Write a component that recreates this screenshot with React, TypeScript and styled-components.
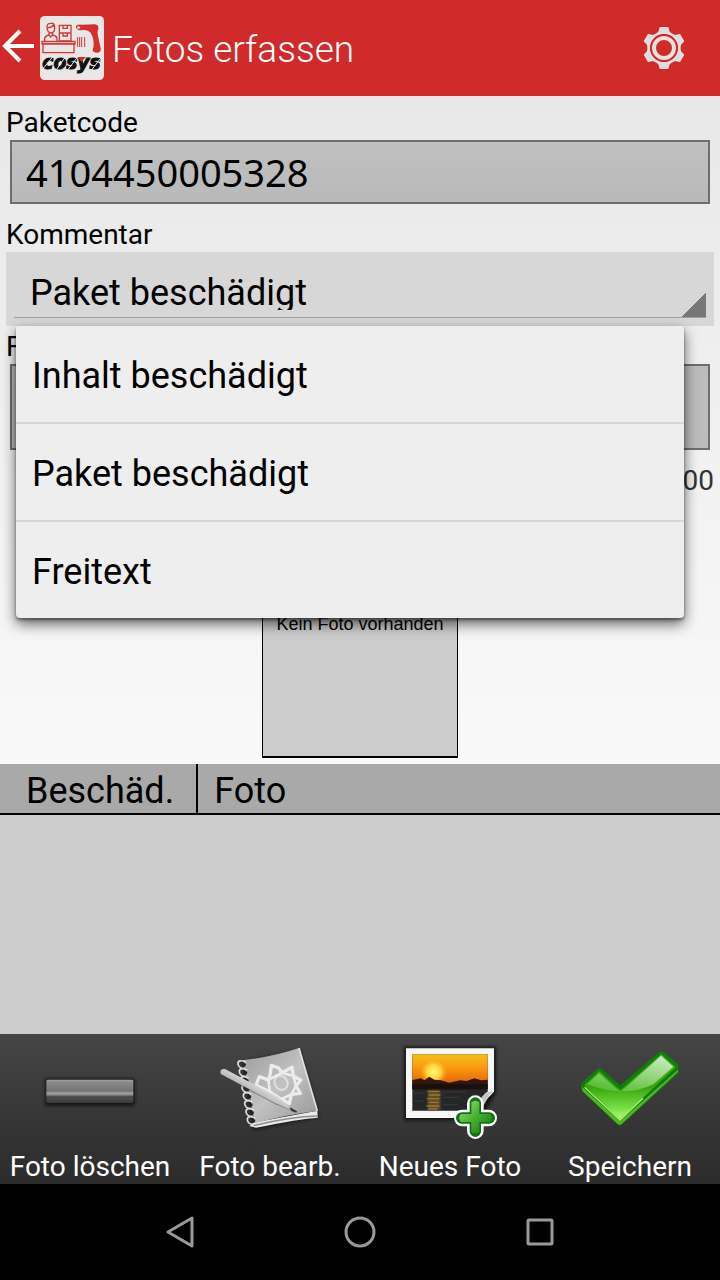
import React, { useState } from "react";
import styled, { createGlobalStyle } from "styled-components";

const GlobalStyle = createGlobalStyle`
  *, *::before, *::after { box-sizing: border-box; }
  body {
    margin: 0;
    background: #000;
    color: #000;
    font-family: Roboto, "Noto Sans", sans-serif;
  }
  button, input, textarea, select { font: inherit; color: inherit; margin: 0; }
`;

const Screen = styled.div`
  display: flex;
  flex-direction: column;
  min-height: 100vh;
`;

const Header = styled.header`
  display: flex;
  align-items: center;
  height: 96px;
  padding-right: 34px;
  background: #d02a2a;
  color: #fff;
`;

const IconButton = styled.button`
  display: flex;
  padding: 0;
  border: 0;
  background: none;
  cursor: pointer;
`;

const Title = styled.h1`
  flex: 1;
  margin: 0;
  padding: 4px 0 0 8px;
  font-size: 37px;
  line-height: 44px;
  font-weight: 300;
`;

const Form = styled.form`
  display: flex;
  flex-direction: column;
  padding: 10px 6px 6px;
  background: linear-gradient(#e8e8e8, #f9f9f9);
`;

const Label = styled.label`
  font-size: 28px;
  line-height: 34px;
`;

const CodeInput = styled.input`
  height: 64px;
  min-width: 0;
  margin: 0 4px 14px;
  padding: 0 14px;
  border: 2px solid #6e6e6e;
  border-radius: 0;
  background: linear-gradient(#c0c0c0, #b9b9b9);
  && {
    font-family: "Noto Sans", sans-serif;
    font-size: 38px;
  }
`;

const Note = styled.textarea`
  height: 86px;
  min-width: 0;
  margin: 0 4px 14px;
  padding: 12px 14px;
  border: 2px solid #6e6e6e;
  border-radius: 0;
  background: #bcbcbc;
  resize: none;
`;

const Spinner = styled.div`
  position: relative;
  height: 74px;
  margin-bottom: 4px;
  padding: 0 8px 8px;
  background: #d7d7d7;
`;

const Select = styled.select`
  display: block;
  appearance: none;
  width: 100%;
  height: 66px;
  padding: 20px 16px 7px;
  border: 0;
  border-bottom: 1px solid #a0a0a0;
  border-radius: 0;
  background: linear-gradient(135deg, transparent 50%, #777 50%) right bottom / 24px 24px no-repeat;
  outline: 0;
  && {
    font-size: 36px;
    line-height: 42px;
  }
`;

const Popup = styled.ul`
  position: absolute;
  z-index: 1;
  top: 100%;
  left: 10px;
  right: 30px;
  margin: 0;
  padding: 0;
  list-style: none;
  border-radius: 2px 2px 4px 4px;
  background: #eee;
  box-shadow: 0 6px 14px rgba(0, 0, 0, 0.6), 0 2px 3px rgba(0, 0, 0, 0.4);
`;

const Option = styled.li`
  & + & { border-top: 2px solid #d6d6d6; }
`;

const OptionButton = styled.button`
  display: block;
  width: 100%;
  height: 96px;
  padding: 4px 16px 0;
  border: 0;
  background: none;
  text-align: left;
  cursor: pointer;
  && { font-size: 36px; }
`;

const Counter = styled.output`
  align-self: flex-end;
  font-size: 28px;
  line-height: 34px;
  color: #333;
`;

const Photo = styled.div`
  align-self: center;
  display: flex;
  flex-direction: column;
  justify-content: center;
  width: 196px;
  height: 256px;
  margin-top: 4px;
  padding-bottom: 12px;
  border: 1px solid #000;
  border-bottom-width: 2px;
  background: #ccc;
  text-align: center;
  white-space: nowrap;
  font-family: "Liberation Sans", sans-serif;
  font-size: 18px;
  line-height: 28px;
`;

const TableArea = styled.div`
  flex: 1;
  background: #ccc;
`;

const Table = styled.table`
  width: 100%;
  border-collapse: separate;
  border-spacing: 0;
  background: #a9a9a9;
`;

const HeadCell = styled.th<{ $first?: boolean }>`
  height: 51px;
  padding: ${(p) => (p.$first ? "4px 22px 0 26px" : "4px 16px 0")};
  width: ${(p) => (p.$first ? "198px" : "auto")};
  border-bottom: 2px solid #000;
  border-right: ${(p) => (p.$first ? "2px solid #000" : "0")};
  text-align: left;
  font-size: 36px;
  line-height: 42px;
  font-weight: 400;
`;

const Toolbar = styled.div`
  display: grid;
  grid-template-columns: repeat(4, 1fr);
  background: linear-gradient(#454545, #2b2b2b);
`;

const Tool = styled.button`
  display: flex;
  flex-direction: column;
  align-items: center;
  gap: 10px;
  padding: 6px 0 0;
  border: 0;
  background: none;
  white-space: nowrap;
  cursor: pointer;
  && {
    color: #fff;
    font-size: 28px;
    line-height: 34px;
  }
`;

const NavBar = styled.nav`
  display: grid;
  grid-template-columns: repeat(3, 1fr);
  height: 96px;
  padding: 0 12.5%;
  background: #000;
`;

const NavButton = styled(IconButton)`
  align-items: center;
  justify-content: center;
`;

const BackArrow = () => (
  <svg width="40" height="40" viewBox="0 0 40 40" fill="none" stroke="#fff" strokeWidth="4" aria-hidden="true">
    <path d="M34 18H5M20 3L5 18L20 33" />
  </svg>
);

const Logo = () => (
  <svg width="64" height="64" viewBox="0 0 192 192" role="img" aria-label="Cosys">
    <rect width="192" height="192" rx="14" fill="#e9e7e5" />
    <g fill="none" stroke="#cf3a36" strokeWidth="4">
      <path d="M9 82H102V110H9ZM6 76H105V84H6Z" />
      <path d="M14 75V67Q15 60 27 57L32 63L38 57Q50 60 51 67V75" />
      <path d="M21 34Q20 22 32 22Q45 20 44 36Q44 50 33 51Q22 50 21 34ZM21 35Q34 36 39 28L44 34M27 50V58M38 50V58" />
      <path d="M58 28H93V75H58ZM58 51H93M69 28V37H82V28M69 51V60H82V51" />
      <path d="M113 63V93M119 63V93M125 63V93M134 63V93" strokeWidth="3" />
    </g>
    <path
      d="M108 31Q110 25 124 26L165 25Q176 26 175 38Q170 48 174 60Q177 76 182 96Q184 108 174 110Q164 112 158 105Q158 98 161 90Q162 66 152 50Q145 43 133 42L120 43Q107 41 108 31Z"
      fill="#d32f2f"
    />
    <path d="M111 32Q116 28 121 34Q119 40 113 39Z" fill="#eee" />
    <text
      x="7"
      y="158"
      fontFamily="DejaVu Sans, sans-serif"
      fontWeight="700"
      fontStyle="italic"
      fontSize="56"
      fill="#111"
      stroke="#111"
      strokeWidth="3"
    >
      cosys
    </text>
    <path d="M5 163L36 125M48 163L76 123M82 163L112 124M154 163L184 124" stroke="#e9e7e5" strokeWidth="3" />
    <path d="M112 123H138L124 137Z" fill="#d32f2f" />
  </svg>
);

const Gear = () => (
  <svg width="44" height="44" viewBox="-66 -66 132 132" aria-hidden="true">
    {[0, 60, 120, 180, 240, 300].map((angle) => (
      <path key={angle} transform={`rotate(${angle})`} d="M-13 -63H13L17 -49L25 -43V-38H-25V-43L-17 -49Z" fill="#e0dddd" />
    ))}
    <circle r="43" fill="#d02a2a" />
    <circle r="45" fill="none" stroke="#e8dfdf" strokeWidth="5" />
    <circle r="30" fill="none" stroke="#e8dfdf" strokeWidth="12" />
  </svg>
);

const RemoveIcon = () => (
  <svg width="100" height="100" viewBox="120 30 300 300" aria-hidden="true">
    <defs>
      <linearGradient id="barFace" x1="0" y1="0" x2="0" y2="1">
        <stop offset="0" stopColor="#a4a4a4" />
        <stop offset="0.1" stopColor="#8b8b8b" />
        <stop offset="0.5" stopColor="#747474" />
        <stop offset="0.56" stopColor="#a0a0a0" />
        <stop offset="0.66" stopColor="#8c8c8c" />
        <stop offset="0.7" stopColor="#505050" />
        <stop offset="1" stopColor="#3a3a3a" />
      </linearGradient>
      <filter id="barShade" x="-10%" y="-40%" width="120%" height="180%">
        <feGaussianBlur stdDeviation="4" />
      </filter>
    </defs>
    <rect x="134" y="146" width="271" height="82" rx="8" fill="#151515" filter="url(#barShade)" />
    <rect x="139" y="149" width="261" height="70" rx="5" fill="url(#barFace)" />
  </svg>
);

const NotebookIcon = () => (
  <svg width="100" height="100" viewBox="60 30 300 300" overflow="visible" aria-hidden="true">
    <defs>
      <linearGradient id="cover" x1="0" y1="0" x2="1" y2="1">
        <stop offset="0" stopColor="#9c9c9c" />
        <stop offset="0.5" stopColor="#c2c2c2" />
        <stop offset="1" stopColor="#969696" />
      </linearGradient>
      <linearGradient id="pen" x1="0" y1="1" x2="1" y2="0">
        <stop offset="0.3" stopColor="#8a8a8a" />
        <stop offset="0.6" stopColor="#e6e6e6" />
      </linearGradient>
      <filter id="bookShade" x="-10%" y="-10%" width="120%" height="120%">
        <feGaussianBlur stdDeviation="5" />
      </filter>
    </defs>
    <path d="M125 95L300 60L358 262L160 302Z" fill="#1c1c1c" filter="url(#bookShade)" />
    <path d="M160 278L352 242L353 263Q300 266 168 293L148 288Z" fill="#e9e9e9" />
    <path d="M160 287Q270 260 352 258" stroke="#8d8d8d" strokeWidth="4" fill="none" />
    <path d="M130 90Q220 80 297 54L352 243Q260 254 164 280Z" fill="url(#cover)" />
    <path d="M297 54L352 243" stroke="#e2e2e2" strokeWidth="5" />
    {[0, 1, 2, 3, 4, 5, 6, 7].map((i) => (
      <g key={i}>
        <circle cx={133 + i * 4} cy={104 + i * 24} r="5" fill="#242424" />
        <path
          d={`M${138 + i * 4} ${96 + i * 24}q-25 -10 -24 6q2 14 21 13`}
          fill="none"
          stroke="#dedede"
          strokeWidth="5"
        />
      </g>
    ))}
    <g fill="none" stroke="#ececec" strokeWidth="10" strokeLinejoin="round">
      <path d="M211 132L214 106L236 114L246 128L276 112L280 138L302 150L288 168L301 190L274 193L268 221L244 207L218 208L210 186L168 166L178 140L205 150Z" />
      <path d="M205 150L246 128L280 138L288 168L274 193L244 207L210 186Z" strokeWidth="8" />
      <path d="M230 140Q256 132 263 158Q262 185 236 178Q214 160 230 140Z" strokeWidth="6" opacity="0.7" />
    </g>
    <path d="M72 117L237 206L287 246L225 223L62 136Q55 117 72 117Z" fill="#3d3d3d" opacity="0.4" />
    <path d="M75 117L235 202L287 245L224 218L62 132Q58 115 75 117Z" fill="url(#pen)" />
    <path d="M274 237L290 246L276 241Z" stroke="#333" strokeWidth="5" />
  </svg>
);

const NewPhotoIcon = () => (
  <svg width="100" height="100" viewBox="90 30 300 300" aria-hidden="true">
    <defs>
      <linearGradient id="sky" x1="0" y1="0" x2="0" y2="1">
        <stop offset="0" stopColor="#f2c01c" />
        <stop offset="0.45" stopColor="#fb9a10" />
        <stop offset="1" stopColor="#e2660a" />
      </linearGradient>
      <radialGradient id="sun">
        <stop offset="0" stopColor="#fff27a" />
        <stop offset="0.5" stopColor="#ffd83c" />
        <stop offset="1" stopColor="#fca013" stopOpacity="0" />
      </radialGradient>
      <linearGradient id="plusFace" x1="0" y1="0" x2="1" y2="1">
        <stop offset="0" stopColor="#9be07c" />
        <stop offset="0.5" stopColor="#46b032" />
        <stop offset="1" stopColor="#16750e" />
      </linearGradient>
      <filter id="photoShade" x="-10%" y="-10%" width="120%" height="120%">
        <feGaussianBlur stdDeviation="5" />
      </filter>
      <filter id="ripple" x="-20%" y="-20%" width="140%" height="140%">
        <feGaussianBlur stdDeviation="3" />
      </filter>
    </defs>
    <path d="M102 50H378V190L330 272H102Z" fill="#161616" filter="url(#photoShade)" />
    <path d="M108 55H372V185L295 264H108Z" fill="#f7f7f7" />
    <path d="M127 73H353V184L300 242H127Z" fill="#252628" />
    <path d="M127 73H353V160H127Z" fill="url(#sky)" />
    <circle cx="191" cy="126" r="42" fill="url(#sun)" />
    <path d="M127 150L153 145L163 151L178 140L193 149L213 151L237 158L270 151L290 153L313 145L334 151L353 149V178H127Z" fill="#32160b" />
    <path d="M127 163H353V178H127Z" fill="#17100d" />
    <path d="M173 181H211V240H173Z" fill="#8a6a2c" opacity="0.6" filter="url(#ripple)" />
    <path d="M173 184H209M176 195H211M171 206H208M175 217H206M169 228H208M174 237H202" stroke="#c09238" strokeWidth="4" opacity="0.6" />
    <path d="M133 189H165M218 186H288M221 202H267M132 213H160M219 224H263" stroke="#454343" strokeWidth="3" opacity="0.7" />
    <path d="M372 184Q356 192 352 207L339 229L298 264Q327 207 347 188Z" fill="#c7c7c7" />
    <path d="M316 221V302M277 264H356" stroke="#fff" strokeWidth="50" strokeLinecap="round" />
    <path d="M316 219V304M275 264H358" stroke="#137218" strokeWidth="34" strokeLinecap="round" />
    <path d="M304 217Q316 207 328 217V252H360Q370 264 360 276H328V305Q316 314 304 305V276H273Q262 264 273 252H304Z" fill="url(#plusFace)" />
  </svg>
);

const CheckIcon = () => (
  <svg width="100" height="100" viewBox="90 30 300 300" aria-hidden="true">
    <defs>
      <linearGradient id="checkFace" x1="0" y1="0" x2="0" y2="1">
        <stop offset="0" stopColor="#49ad27" />
        <stop offset="0.5" stopColor="#38a50c" />
        <stop offset="0.85" stopColor="#7ce34a" />
        <stop offset="1" stopColor="#b4fa83" />
      </linearGradient>
      <linearGradient id="checkShine" x1="0.9" y1="0" x2="0.3" y2="1">
        <stop offset="0" stopColor="#effced" />
        <stop offset="1" stopColor="#5fc33c" />
      </linearGradient>
    </defs>
    <path d="M93 168Q92 162 98 156L143 116Q149 112 155 118L211 166L327 67Q335 60 342 67L382 101Q388 108 386 128L216 283Q209 290 202 283L96 184Z" fill="#127d0b" />
    <path d="M96 171L210 274L384 119L383 127L215 282Q209 287 203 282L97 182Z" fill="#4fb821" />
    <path d="M103 166L148 124L211 181L334 73L377 112L210 268Z" fill="url(#checkFace)" />
    <path d="M111 163L147 130L211 187L333 77L370 110L310 163Q225 205 111 163Z" fill="url(#checkShine)" opacity="0.8" />
    <path d="M104 172L210 270L279 205" fill="none" stroke="#b5ef7c" strokeWidth="4" />
  </svg>
);

const tools = [
  { label: "Foto löschen", Icon: RemoveIcon },
  { label: "Foto bearb.", Icon: NotebookIcon },
  { label: "Neues Foto", Icon: NewPhotoIcon },
  { label: "Speichern", Icon: CheckIcon },
];

const comments = ["Inhalt beschädigt", "Paket beschädigt", "Freitext"];

export default function App() {
  const [comment, setComment] = useState("Paket beschädigt");
  const [note, setNote] = useState("");
  const [open, setOpen] = useState(true);

  const choose = (value: string) => {
    setComment(value);
    setOpen(false);
  };

  return (
    <Screen>
      <GlobalStyle />
      <Header>
        <IconButton type="button" aria-label="Zurück">
          <BackArrow />
        </IconButton>
        <Logo />
        <Title>Fotos erfassen</Title>
        <IconButton type="button" aria-label="Einstellungen">
          <Gear />
        </IconButton>
      </Header>

      <Form>
        <Label htmlFor="code">Paketcode</Label>
        <CodeInput id="code" readOnly value="4104450005328" />

        <Label htmlFor="comment">Kommentar</Label>
        <Spinner>
          <Select id="comment" value={comment} onChange={(e) => choose(e.target.value)}>
            {comments.map((c) => (
              <option key={c}>{c}</option>
            ))}
          </Select>
          {open && (
            <Popup>
              {comments.map((c) => (
                <Option key={c}>
                  <OptionButton type="button" onClick={() => choose(c)}>
                    {c}
                  </OptionButton>
                </Option>
              ))}
            </Popup>
          )}
        </Spinner>

        <Label htmlFor="note">Freitext</Label>
        <Note id="note" maxLength={100} value={note} onChange={(e) => setNote(e.target.value)} />
        <Counter htmlFor="note">{note.length}/100</Counter>

        <Photo>Kein Foto vorhanden</Photo>
      </Form>

      <TableArea>
        <Table>
          <thead>
            <tr>
              <HeadCell $first>Beschäd.</HeadCell>
              <HeadCell>Foto</HeadCell>
            </tr>
          </thead>
        </Table>
      </TableArea>

      <Toolbar>
        {tools.map(({ label, Icon }) => (
          <Tool key={label} type="button">
            <Icon />
            {label}
          </Tool>
        ))}
      </Toolbar>

      <NavBar>
        <NavButton type="button" aria-label="Zurück">
          <svg width="30" height="34" viewBox="0 0 30 34" fill="none" stroke="#999" strokeWidth="3" strokeLinejoin="round" aria-hidden="true">
            <path d="M27 3V31L3 17Z" />
          </svg>
        </NavButton>
        <NavButton type="button" aria-label="Startseite">
          <svg width="34" height="34" viewBox="0 0 34 34" fill="none" stroke="#999" strokeWidth="3" aria-hidden="true">
            <circle cx="17" cy="17" r="14" />
          </svg>
        </NavButton>
        <NavButton type="button" aria-label="Übersicht">
          <svg width="34" height="34" viewBox="0 0 34 34" fill="none" stroke="#999" strokeWidth="3" aria-hidden="true">
            <rect x="5" y="5" width="24" height="24" rx="1" />
          </svg>
        </NavButton>
      </NavBar>
    </Screen>
  );
}
